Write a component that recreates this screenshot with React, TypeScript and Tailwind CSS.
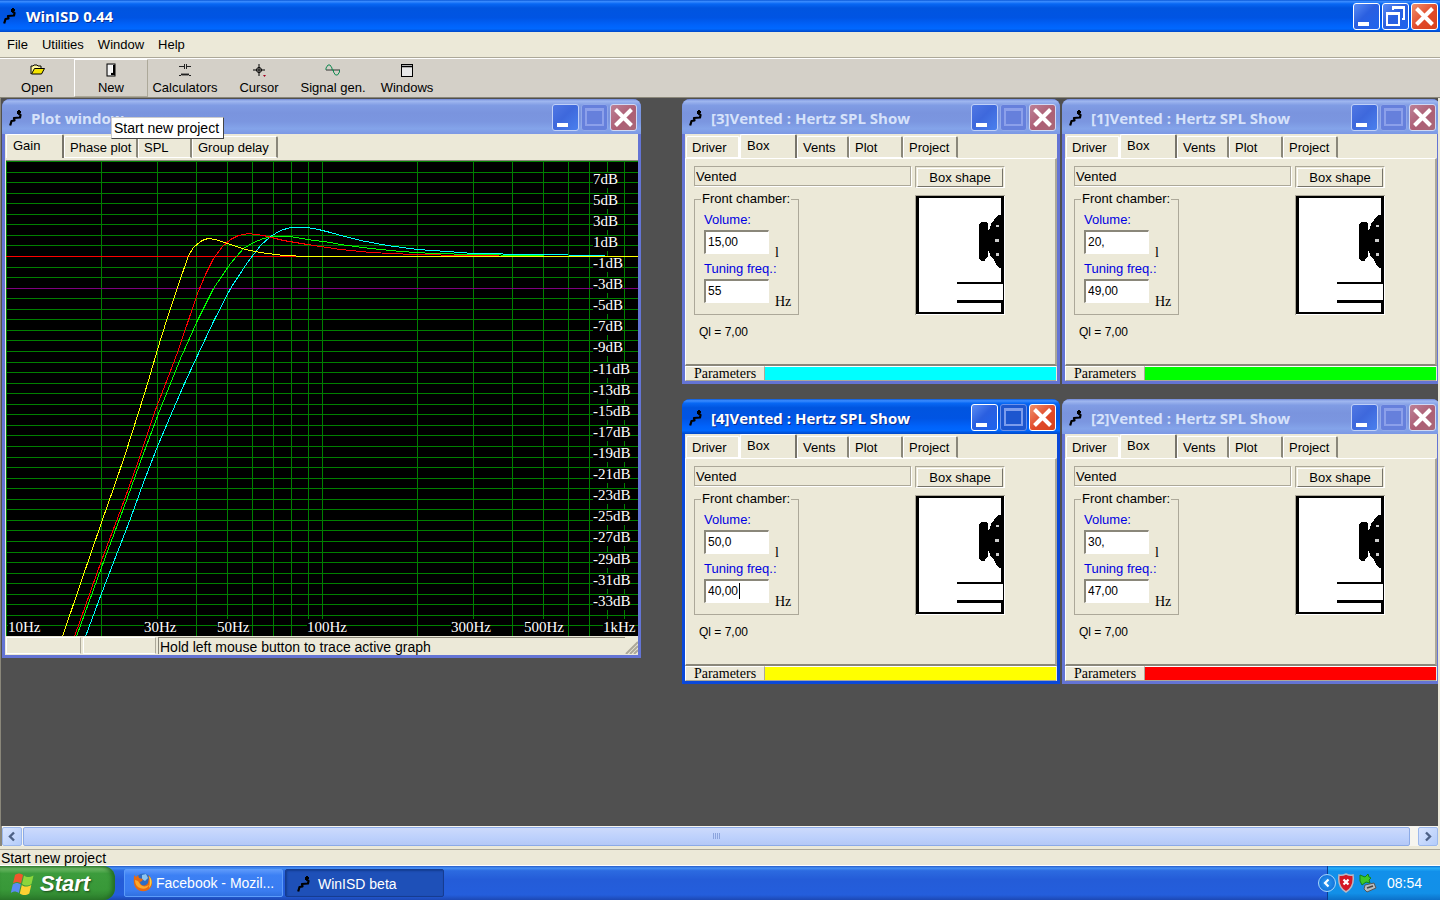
import React from "react";

const SANS = "font-['Liberation_Sans',Arial,sans-serif]";
const SERIF = "font-['Liberation_Serif','Times_New_Roman',serif]";
const TITLE = "font-['Open_Sans','Trebuchet_MS',sans-serif]";

function AppIcon() {
  return (
    <svg width="13" height="16" viewBox="0 0 13 16" className="shrink-0" aria-hidden="true">
      <path d="M8 1h1V0h2v1h1v2h-1v1H8z" fill="#000" />
      <path d="M9.5 3.500 L11.500 5 L11 7.500 L5 8 L5.500 10.500 L2.500 11 L1.200 15.500" fill="none" stroke="#000" strokeWidth="2.200" strokeLinejoin="round" />
    </svg>
  );
}

type CaptionKind = "minimize" | "maximize" | "restore" | "close";

function CaptionButton({ kind, active }: { kind: CaptionKind; active: boolean }) {
  const dim = kind === "maximize";
  const tone =
    kind === "close"
      ? active
        ? "border-white bg-[linear-gradient(135deg,#f0906c,#e0492a_55%,#d8431c)]"
        : "border-[#d0d8f4] bg-[linear-gradient(135deg,#bd8096,#ad5f75_55%,#a96878)]"
      : dim
        ? active
          ? "border-[#6c92ea] bg-[#1d56cf]"
          : "border-[#90a8ea] bg-[#6680dc]"
        : active
          ? "border-white bg-[linear-gradient(135deg,#5a8cf4,#2a5fe0_45%,#1e64ee)]"
          : "border-[#c0d0f8] bg-[linear-gradient(135deg,#5078e4,#3e68dc_45%,#4a80ee)]";
  return (
    <button type="button" disabled={dim} aria-label={kind} className={`h-[27px] w-[27px] rounded-[3px] border ${tone}`}>
      <svg viewBox="0 0 25 25" className="block h-full w-full" shapeRendering={kind === "close" ? "auto" : "crispEdges"}>
        {kind === "minimize" && <rect x="4" y="18" width="11" height="4" fill="#fff" />}
        {kind === "maximize" && (
          <path d="M3 3h19v18H3zM5 6v13h15V6z" fillRule="evenodd" fill={active ? "#7c9cec" : "#8ca0ea"} />
        )}
        {kind === "restore" && (
          <>
            <path d="M9 2h13v14h-3v-2h1V5h-9v1H9z" fill="#fff" />
            <path d="M3 8h14v14H3zM5 11v9h10v-9z" fillRule="evenodd" fill="#fff" />
          </>
        )}
        {kind === "close" && <path d="M4.500 4.500l16 16M20.500 4.500l-16 16" stroke="#fff" strokeWidth="4" />}
      </svg>
    </button>
  );
}

const ACTIVE_BAR =
  "bg-[linear-gradient(180deg,#0a58d8_0%,#3a8cff_5%,#0868f4_12%,#0055e0_25%,#0054e3_55%,#0062fa_78%,#0068ff_90%,#0048c8_100%)]";
const IDLE_BAR =
  "bg-[linear-gradient(180deg,#7088d8_0%,#a0b8f0_6%,#809ce4_18%,#7a94de_40%,#7b96e0_65%,#84a4ea_85%,#7c98e4_100%)]";

function ChildWindow(props: { title: string; active?: boolean; place: string; children: React.ReactNode }) {
  const active = !!props.active;
  return (
    <section
      className={`absolute flex flex-col rounded-t-lg border-x-[3px] border-b-[3px] ${props.place} ${
        active ? "border-[#0a48d8] bg-[#0a48d8]" : "border-[#6474d4] bg-[#6474d4]"
      }`}
    >
      <header className={`-mx-[3px] flex h-[35px] shrink-0 items-center rounded-t-lg pt-[2px] pr-1 pl-[7px] ${active ? ACTIVE_BAR : IDLE_BAR}`}>
        <AppIcon />
        <h2
          className={`ml-[9px] grow text-[15px] leading-5 font-bold whitespace-nowrap ${TITLE} ${
            active ? "text-white [text-shadow:1px_1px_0_#0a2c90]" : "text-[#d6e2fa]"
          }`}
        >
          {props.title}
        </h2>
        <div className="flex gap-[2px]">
          <CaptionButton kind="minimize" active={active} />
          <CaptionButton kind="maximize" active={active} />
          <CaptionButton kind="close" active={active} />
        </div>
      </header>
      {props.children}
    </section>
  );
}

function Tab({ label, width, active, first }: { label: string; width: string; active?: boolean; first?: boolean }) {
  return (
    <button
      type="button"
      role="tab"
      aria-selected={!!active}
      className={`shrink-0 rounded-t-[2px] border-t border-l border-r-2 border-t-white border-l-white text-left text-[13px] whitespace-nowrap ${width} ${
        active
          ? "h-6 border-r-[#77746a] bg-[#ece9d8] pb-[2px] pl-[6px] leading-5"
          : `h-[22px] border-b border-b-white pt-[2px] pl-[5px] leading-[18px] ${first ? "border-r-white" : "border-r-[#8a877a]"}`
      }`}
    >
      {label}
    </button>
  );
}

const X0 = 6;
const Y0 = 161;
const freqX = (hz: number) => Math.round(X0 + 316 * Math.log10(hz / 10));
const gainY = (db: number) => Math.round(Y0 + (9 - db) * 10.556);

const freqLines = [10, 20, 30, 40, 50, 60, 70, 80, 90, 100, 200, 300, 400, 500, 600, 700, 800, 900];
const gainLines = Array.from({ length: 45 }, (_, i) => 9 - i);
const gainLabels = Array.from({ length: 21 }, (_, i) => 7 - i * 2);
const freqLabels = [
  { text: "10Hz", x: 8, w: 32 },
  { text: "30Hz", x: 144, w: 32 },
  { text: "50Hz", x: 217, w: 32 },
  { text: "100Hz", x: 307, w: 39 },
  { text: "300Hz", x: 451, w: 39 },
  { text: "500Hz", x: 524, w: 39 },
  { text: "1kHz", x: 603, w: 32 },
];

const curves = [
  {
    color: "#00ffff",
    points:
      "85,636 101,593 130,518 143,482 157,446 171,413 184,383 197,355 213,321 230,288 247,262 260,245 270,236 280,230 290,227 307,227 318,229 330,232 337,234 360,240 387,245 417,249 447,251 473,253 530,254 605,255",
  },
  {
    color: "#00ff00",
    points:
      "76,636 101,567 123,508 143,453 158,413 180,358 197,320 213,288 230,263 243,248 253,242 263,238 273,236 290,236 307,239 330,242 340,244 370,248 400,251 433,253 473,254 527,255 560,256 638,256",
  },
  {
    color: "#ff0000",
    points:
      "74,636 101,560 120,510 137,463 154,412 177,352 197,293 205,274 213,258 222,246 230,239 238,235 248,233 255,234 263,235 283,240 307,244 320,246 340,249 370,252 413,254 467,255 529,256 638,256",
  },
  {
    color: "#ffff00",
    points:
      "62,636 80,583 101,522 113,488 125,453 138,412 148,380 157,349 167,317 177,287 188,255 193,247 200,241 204,239 208,238 215,239 230,244 245,249 260,252 283,255 307,256 638,256",
  },
];

function GainPlot() {
  return (
    <svg viewBox="6 161 632 475" className={`block w-full bg-black text-[15px] ${SERIF}`} role="img" aria-label="Gain plot">
      <g shapeRendering="crispEdges">
        {freqLines.map((f) => (
          <rect key={f} x={freqX(f)} y={Y0} width="1" height="475" fill="#008000" />
        ))}
        {gainLines.map((d) => (
          <rect key={d} x={X0} y={gainY(d)} width="632" height="1" fill={d === 0 ? "#ff0000" : d === -3 ? "#800080" : "#008000"} />
        ))}
      </g>
      {gainLabels.map((d) => (
        <g key={d}>
          <rect x="593" y={gainY(d + 1) + 1} width={d > 0 ? 23 : d > -10 ? 29 : 36} height="15" fill="#000" />
          <text x="593" y={gainY(d + 1) + 12} fill="#fff">{`${d}dB`}</text>
        </g>
      ))}
      {freqLabels.map((l) => (
        <g key={l.text}>
          <rect x={l.x} y="619" width={l.w} height="17" fill="#000" />
          <text x={l.x} y="632" fill="#fff">{l.text}</text>
        </g>
      ))}
      <g fill="none" strokeWidth="1" shapeRendering="crispEdges" transform="translate(.5 .5)">
        {curves.map((c) => (
          <polyline key={c.color} points={c.points} stroke={c.color} />
        ))}
      </g>
    </svg>
  );
}

function PlotWindow() {
  return (
    <ChildWindow title="Plot window" place="left-px top-px w-[639px]">
      <div className="bg-[#ece9d8] pl-px">
        <div role="tablist" className="flex h-[27px] items-end border-b border-[#8a877a] bg-[#ece9d8] pb-[2px]">
          <Tab label="Gain" width="w-[58px]" active />
          <Tab label="Phase plot" width="w-[74px]" />
          <Tab label="SPL" width="w-[54px]" />
          <Tab label="Group delay" width="w-[86px]" />
        </div>
        <GainPlot />
        <footer className="flex h-[19px] items-stretch py-px text-[14px] leading-[18px]">
          <div className="w-[75px] border border-t-white border-r-[#aca899] border-b-white border-l-white" />
          <div className="ml-[2px] w-[73px] border border-t-white border-r-[#aca899] border-b-white border-l-white" />
          <div className="ml-[2px] grow border-t border-l border-[#8a877a] pl-px">Hold left mouse button to trace active graph</div>
          <svg width="13" height="17" viewBox="0 0 13 17" aria-hidden="true">
            <path d="M1 17L13 5M5 17l8-8M9 17l4-4" stroke="#aca899" strokeWidth="2" />
          </svg>
        </footer>
      </div>
    </ChildWindow>
  );
}

function SpeakerBox() {
  return (
    <svg width="90" height="120" viewBox="0 0 90 120" shapeRendering="crispEdges" role="img" aria-label="Box drawing">
      <path d="M0 0h90v120H0z" fill="#fff" />
      <path d="M0 0h90v1H1v119H0z" fill="#aca899" />
      <path d="M1 1h88v118H1zM4 3v114h82V3z" fillRule="evenodd" />
      <path d="M64 29l2-2h5l2 2v6l2-2 1-4 3-4 2-3 3-2h4v53h-4l-3-4-2-4-3-3-2-5-1-1v6l-2 1-1 3h-4l-2-2z" />
      <path d="M81 30h3v2h-3zM80 44h4v3h-4zM81 58h3v3h-3z" fill="#ccc" />
      <path d="M42 87h46v21H42z" />
      <path d="M42 89h46v16H42z" fill="#fff" />
    </svg>
  );
}

interface BoxProps {
  id: number;
  volume: string;
  tuning: string;
  bar: string;
  place: string;
  active?: boolean;
}

const FIELD =
  "block h-6 w-[65px] border border-t-2 border-l-2 border-t-[#8a877a] border-r-white border-b-white border-l-[#8a877a] bg-white pb-px pl-[2px] text-[12px] outline-none";

function BoxWindow({ id, volume, tuning, bar, place, active }: BoxProps) {
  return (
    <ChildWindow title={`[${id}]Vented : Hertz SPL Show`} active={active} place={`w-[378px] ${place}`}>
      <div className="bg-[#ece9d8]">
        <div role="tablist" className="flex h-6 items-end pl-px">
          <Tab label="Driver" width="w-[54px]" first />
          <Tab label="Box" width="w-[57px]" active />
          <Tab label="Vents" width="w-[52px]" />
          <Tab label="Plot" width="w-[54px]" />
          <Tab label="Project" width="w-[55px]" />
        </div>
        <div className="h-[208px] border-t border-r-2 border-b-2 border-l border-t-white border-r-[#aca899] border-b-[#8a877a] border-l-white pt-[7px] pl-2">
          <div className="grid grid-cols-[217px_90px] gap-x-1">
            <input
              aria-label="Box type"
              readOnly
              value="Vented"
              className="h-5 border border-[#aca899] bg-[#ece9d8] pl-px text-[13px] shadow-[1px_1px_0_#fff] outline-none"
            />
            <button
              type="button"
              className="h-[22px] border border-t-[#aca899] border-r-white border-b-white border-l-[#aca899] p-px text-[13px] leading-[17px]"
            >
              <span className="block border border-t-white border-r-[#77746a] border-b-[#77746a] border-l-white">Box shape</span>
            </button>
            <fieldset className="mt-[3px] h-[124px] w-[105px] border border-[#aca899] pl-[9px] text-[13px] leading-4">
              <legend className="-ml-[3px] px-px whitespace-nowrap">Front chamber:</legend>
              <label htmlFor={`volume-${id}`} className="mt-[5px] mb-[2px] block text-[#0000e0]">
                Volume:
              </label>
              <div className="flex h-[31px] items-end gap-1.5">
                <input id={`volume-${id}`} defaultValue={volume} className={`self-start ${FIELD}`} />
                <span className={`text-[14px] ${SERIF}`}>l</span>
              </div>
              <label htmlFor={`tuning-${id}`} className="mb-[2px] block whitespace-nowrap text-[#0000e0]">
                Tuning freq.:
              </label>
              <div className="flex h-[31px] items-end gap-1.5">
                {active ? (
                  <div className={`flex items-center self-start ${FIELD}`}>
                    <input id={`tuning-${id}`} defaultValue={tuning} className="w-[31px] outline-none" />
                    <i className="h-4 w-px bg-black" />
                  </div>
                ) : (
                  <input id={`tuning-${id}`} defaultValue={tuning} className={`self-start ${FIELD}`} />
                )}
                <span className={`text-[14px] ${SERIF}`}>Hz</span>
              </div>
            </fieldset>
            <div className="pt-[7px]">
              <SpeakerBox />
            </div>
          </div>
          <p className="pt-[9px] pl-[5px] text-[12px] leading-4">Ql = 7,00</p>
        </div>
        <footer className="flex h-[15px]">
          <button type="button" className={`w-20 border border-t-white border-r-[#aca899] border-b-[#aca899] border-l-white text-[14px] leading-[13px] ${SERIF}`}>
            Parameters
          </button>
          <div className={`mr-px grow border-t border-b border-t-white border-b-[#aca899] ${bar}`} />
        </footer>
      </div>
    </ChildWindow>
  );
}

const toolIcons: Record<string, React.ReactNode> = {
  Open: (
    <>
      <path d="M2 12V4h2l1-1h3l1 1h3v3" fill="#fff7a0" stroke="#000" />
      <path d="M2.500 12l3-5.500h10l-3 5.500z" fill="#f4e400" stroke="#000" />
    </>
  ),
  New: (
    <>
      <rect x="4" y="2" width="8" height="12" fill="#dcdcdc" stroke="#000" />
      <path d="M5 3h3v10H5z" fill="#f4f4f4" />
      <path d="M8.500 3h3v7h-3z" fill="#fff" />
      <path d="M11 3v9H8" stroke="#000" strokeWidth="2" fill="none" />
    </>
  ),
  Calculators: <path d="M2 4.500h5M7.500 2v5M9.500 2v5M10 4.500h4M2 13.500h2l1-2 1 2 1-2 1 2 1-2 1 2 1-2 1 2h2" fill="none" stroke="#222" />,
  Cursor: (
    <>
      <path d="M8 2v12M2 8h12" stroke="#000" />
      <circle cx="8" cy="8" r="2.500" fill="none" stroke="#000" />
      <path d="M12 13h3l-1.500 2z" fill="#a00020" />
    </>
  ),
  "Signal gen.": (
    <>
      <path d="M1 8h14" stroke="#333" />
      <path d="M1 8V6l2-3h2l2 3v2h1.500v2l2 3h2l2-3V8" fill="none" stroke="#108850" />
    </>
  ),
  Windows: (
    <>
      <rect x="2.500" y="2.500" width="11" height="12" fill="#e8e8e8" stroke="#000" />
      <path d="M3 4.500h10" stroke="#000" strokeWidth="1.500" />
    </>
  ),
};

function WindowsFlag() {
  return (
    <svg width="24" height="24" viewBox="0 0 24 24" aria-hidden="true">
      <path d="M5 3c3-2 5-2 8 0l-2 8.500c-3-2-5-2-8 0z" fill="#f0562c" />
      <path d="M14 3.500c3 2 5 2 9.500 0l-2 8.500c-3.500 2-6 2-9.500 0z" fill="#8cd63c" />
      <path d="M2.800 12.500c3-2 5-2 8 0l-2 8.500c-3-2-5-2-8 0z" fill="#5a8cf4" />
      <path d="M11.800 13c3 2 5 2 9.500 0l-2 8.500c-3.500 2-6 2-9.500 0z" fill="#fcd232" />
    </svg>
  );
}

function FirefoxIcon() {
  return (
    <svg width="20" height="20" viewBox="0 0 20 20" aria-hidden="true">
      <circle cx="10.500" cy="8.500" r="8" fill="#2c6cc4" />
      <path d="M9 2l4-1 2 4-3 3-3-2z" fill="#8cc4f0" />
      <path d="M1 2l2 2 2-2 1 3 4 1-1 2-2 1c0 4 5 5 8 1l1-5-1-3c4 3 5 8 3 12-3 5-11 6-15 1C0 11 1 7 1 2z" fill="#e86a10" />
      <path d="M2 7c0 4 2 7 5 8 4 2 8 0 9-3-3 2-7 2-9-1L5 8z" fill="#fca82c" />
      <path d="M16 3c4 4 3 9 0 12 1-4 1-8 0-12z" fill="#fcd040" />
    </svg>
  );
}

function ScrollArrow({ dir }: { dir: "left" | "right" }) {
  return (
    <button
      type="button"
      aria-label={`Scroll ${dir}`}
      className="h-[19px] w-5 shrink-0 rounded-[2px] border border-[#9cb8ec] bg-[linear-gradient(135deg,#d8e4fe,#b4ccfa)]"
    >
      <svg viewBox="0 0 18 17" className="block">
        <path d={dir === "left" ? "M11 4.500l-4 4 4 4" : "M7 4.500l4 4-4 4"} fill="none" stroke="#4d6185" strokeWidth="2.400" />
      </svg>
    </button>
  );
}

export default function App() {
  return (
    <div className={`flex min-h-screen flex-col bg-[#ece9d8] text-[13px] text-black ${SANS}`}>
      <header className={`flex h-8 shrink-0 items-center pr-[2px] pl-[3px] ${ACTIVE_BAR}`}>
        <AppIcon />
        <h1 className={`ml-[10px] grow text-[15px] leading-5 font-bold text-white [text-shadow:1px_1px_0_#0a2c90] ${TITLE}`}>WinISD 0.44</h1>
        <div className="flex gap-[2px]">
          <CaptionButton kind="minimize" active />
          <CaptionButton kind="restore" active />
          <CaptionButton kind="close" active />
        </div>
      </header>

      <nav className="flex h-[26px] shrink-0 items-center gap-[14px] border-b border-[#aca899] pl-[7px]">
        {["File", "Utilities", "Window", "Help"].map((m) => (
          <button key={m} type="button">
            {m}
          </button>
        ))}
      </nav>

      <div className="flex h-10 shrink-0 border-t border-b border-t-white border-b-[#8a877a] bg-[#d4d0c8]">
        {Object.keys(toolIcons).map((name) => (
          <button
            key={name}
            type="button"
            className={`flex w-[74px] flex-col items-center border pt-[2px] leading-4 ${
              name === "New" ? "border-t-white border-r-[#aca899] border-b-[#aca899] border-l-white" : "border-transparent"
            }`}
          >
            <svg width="16" height="16" viewBox="0 0 16 16" className="mb-[2px] shrink-0" aria-hidden="true">
              {toolIcons[name]}
            </svg>
            {name}
          </button>
        ))}
      </div>

      <main className="relative grow overflow-hidden border-r-2 border-l border-r-[#ece9d8] border-l-[#8a877a] bg-[#505050]">
        <PlotWindow />
        <BoxWindow id={3} volume="15,00" tuning="55" bar="bg-[#00ffff]" place="left-[681px] top-px" />
        <BoxWindow id={1} volume="20," tuning="49,00" bar="bg-[#00ff00]" place="left-[1061px] top-px" />
        <BoxWindow id={4} volume="50,0" tuning="40,00" bar="bg-[#ffff00]" place="left-[681px] top-[301px]" active />
        <BoxWindow id={2} volume="30," tuning="47,00" bar="bg-[#ff0000]" place="left-[1061px] top-[301px]" />
        <div
          role="tooltip"
          className="absolute top-[19px] left-[110px] w-[113px] border border-t-[#ccc] border-r-[#444] border-b-[#444] border-l-[#ccc] bg-white px-[2px] text-[14px] leading-5 whitespace-nowrap"
        >
          Start new project
        </div>
      </main>

      <div className="flex h-5 shrink-0 items-center border-r-2 border-l-2 border-r-[#ece9d8] border-l-[#8a877a] bg-[#f6f5ef]">
        <ScrollArrow dir="left" />
        <div className="mr-2 ml-px flex h-[19px] grow items-center justify-center gap-px rounded-[2px] border border-[#8caae6] bg-[linear-gradient(180deg,#ccdafc,#bcd0fc_60%,#b4c8f6)]">
          {[0, 1, 2, 3].map((n) => (
            <i key={n} className="h-[6px] w-px bg-[#8ca4dc]" />
          ))}
        </div>
        <ScrollArrow dir="right" />
      </div>

      <div className="h-5 shrink-0 border-b border-white pt-[3px]">
        <div className="h-4 border-t border-[#aca899] pl-px text-[14px] leading-4">Start new project</div>
      </div>

      <footer className="flex h-[34px] shrink-0 items-stretch bg-[linear-gradient(180deg,#2258c8_0%,#4690f4_6%,#2c6ae0_14%,#245cd8_40%,#245edc_85%,#1c48b4_100%)]">
        <button
          type="button"
          className={`flex w-[115px] items-center gap-1.5 rounded-r-xl bg-[linear-gradient(180deg,#3c8c3c_0%,#6cb864_8%,#3c9c3c_22%,#389838_70%,#2c7c2c_100%)] pt-[2px] pl-[10px] text-[22px] leading-6 font-bold text-white italic shadow-[inset_-3px_0_4px_#246c24] [text-shadow:1px_1px_2px_#1c4c1c] ${SANS}`}
        >
          <WindowsFlag />
          Start
        </button>
        <div className="flex grow gap-[2px] py-[3px] pl-[9px] text-white">
          <button
            type="button"
            className="flex w-[159px] items-center gap-[3px] rounded-[2px] border border-[#5c9cfa] bg-[linear-gradient(180deg,#5c98fa,#3c80f4_20%,#3a7cf0_80%,#3070e0)] pl-2 text-[14px]"
          >
            <FirefoxIcon />
            Facebook - Mozil...
          </button>
          <button
            type="button"
            className="flex w-[159px] items-center gap-2 rounded-[2px] border border-[#163c90] bg-[#1e50b8] pt-[2px] pl-[11px] text-[14px] shadow-[inset_1px_1px_2px_#143c90]"
          >
            <AppIcon />
            WinISD beta
          </button>
        </div>
        <div className="flex w-[113px] items-center border-l border-[#0c3c90] bg-[linear-gradient(180deg,#0c70d0_0%,#28b0f8_6%,#1290ea_16%,#1290e8_80%,#0c70c8_100%)] text-white">
          <button type="button" aria-label="Show hidden icons" className="-ml-[10px] h-[18px] w-[18px] shrink-0 rounded-full border border-[#a8d8fc] bg-[radial-gradient(circle,#2c9cf4,#0c64d0)]">
            <svg viewBox="0 0 16 16" className="block">
              <path d="M9.500 4.500L6 8l3.500 3.500" fill="none" stroke="#fff" strokeWidth="2.200" />
            </svg>
          </button>
          <svg width="18" height="20" viewBox="0 0 18 20" className="ml-px shrink-0" aria-hidden="true">
            <path d="M2 2c3 1 5 0 7-1 2 1 4 2 7 1 1 7 0 13-7 17C2 15 1 9 2 2z" fill="#d41824" stroke="#b8b8c4" strokeWidth="1.500" />
            <path d="M6.500 6.500l5 5M11.500 6.500l-5 5" stroke="#fff" strokeWidth="2.200" />
          </svg>
          <svg width="18" height="20" viewBox="0 0 18 20" className="ml-1 shrink-0" aria-hidden="true">
            <path d="M6 12l9-2 2 5-9 4-3-3z" fill="#b8bcc0" stroke="#555" />
            <path d="M8 15l6-2" stroke="#444" strokeWidth="1.500" />
            <path d="M1 2l5 2 3-3 1 3 2 1-2 2 1 3-4-1-4 3-2-4z" fill="#3cc828" stroke="#14801c" />
          </svg>
          <time className="ml-[10px] text-[14px] leading-5">08:54</time>
        </div>
      </footer>
    </div>
  );
}
